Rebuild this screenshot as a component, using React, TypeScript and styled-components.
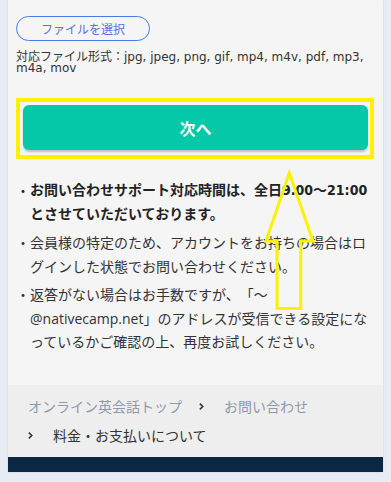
import React from "react";
import styled, { createGlobalStyle } from "styled-components";

const GlobalStyle = createGlobalStyle`
  html, body { margin: 0; padding: 0; }
  body {
    background: #e8ecf4;
    font-family: "Open Sans", "Noto Sans CJK JP", sans-serif;
    color: #333;
  }
`;

const Page = styled.div`
  padding: 0 8px 10px;
`;

const Panel = styled.div`
  position: relative;
  background: #f5f5f5;
  box-shadow: 0 0 2px rgba(0, 0, 0, 0.12);
`;

const Main = styled.section`
  padding: 16px 8px 31px;
`;

const FileButton = styled.button`
  display: flex;
  align-items: center;
  justify-content: center;
  width: 134px;
  height: 25px;
  padding: 0;
  border: 1.5px solid #4a7be3;
  border-radius: 13px;
  background: transparent;
  color: #5a6ee6;
  font-family: "Noto Sans CJK JP", sans-serif;
  font-size: 12px;
  cursor: pointer;
`;

const FormatText = styled.p`
  margin: 11px 0 0;
  font-family: "DejaVu Sans", "Noto Sans CJK JP", sans-serif;
  font-size: 12px;
  line-height: 11px;
  color: #333;
  text-spacing-trim: space-all;
`;

const Highlight = styled.div`
  margin-top: 24px;
  width: 358px;
  box-sizing: border-box;
  border: 4px solid #fff100;
  padding: 3px 2px 5px 3px;
`;

const NextButton = styled.button`
  display: flex;
  align-items: center;
  justify-content: center;
  width: 100%;
  height: 45px;
  border: none;
  border-radius: 6px;
  background: #04c8a8;
  box-shadow: 0 2px 2px rgba(0, 0, 0, 0.22);
  color: #fff;
  font-family: "Noto Sans CJK JP", sans-serif;
  font-weight: 700;
  font-size: 16px;
  cursor: pointer;
`;

const Notes = styled.ul`
  list-style: none;
  margin: 20px 0 0;
  padding: 0;
  text-spacing-trim: space-all;
`;

const Note = styled.li<{ $bold?: boolean }>`
  display: flex;
  font-size: 14px;
  line-height: 23.5px;
  font-weight: ${(p) => (p.$bold ? 700 : 400)};
  color: ${(p) => (p.$bold ? "#222" : "#333")};
  ${(p) =>
    p.$bold
      ? `font-family: "DejaVu Sans Condensed", "DejaVu Sans", "Noto Sans CJK JP", sans-serif; font-stretch: condensed;`
      : ""}
  & + & { margin-top: 5px; }
`;

const Dot = styled.span`
  flex: 0 0 14px;
  font-weight: 400;
  text-align: center;
  font-family: "Noto Sans CJK JP", sans-serif;
  font-stretch: normal;
`;

const NoteText = styled.span`
  flex: 1;
  min-width: 0;
`;

const Breadcrumb = styled.ol`
  display: flex;
  flex-wrap: wrap;
  list-style: none;
  margin: 0;
  padding: 7px 20px;
  background: #eeeeee;
  font-family: "Noto Sans CJK JP", sans-serif;
  font-size: 14px;
  line-height: 29px;
`;

const Crumb = styled.li<{ $current?: boolean }>`
  display: flex;
  align-items: center;
  margin-right: 17px;
  color: ${(p) => (p.$current ? "#333" : "#8e99ab")};
`;

const Chevron = styled.svg`
  flex: 0 0 auto;
  margin-right: 20px;
`;

const Footer = styled.div`
  height: 15px;
  background: #0b2744;
`;

const ArrowMark = styled.svg`
  position: absolute;
  left: 242px;
  top: 160px;
  pointer-events: none;
`;

const Sep = () => (
  <Chevron width="5" height="7" viewBox="0 0 5 7">
    <polyline points="0.8,0.6 3.8,3.5 0.8,6.4" fill="none" stroke="#333" strokeWidth="1.5" />
  </Chevron>
);

export default function App() {
  return (
    <>
      <GlobalStyle />
      <Page>
        <Panel>
          <Main>
            <FileButton>ファイルを選択</FileButton>
            <FormatText>
              対応ファイル形式：jpg, jpeg, png, gif, mp4, m4v, pdf, mp3, m4a, mov
            </FormatText>
            <Highlight>
              <NextButton>次へ</NextButton>
            </Highlight>
            <Notes>
              <Note $bold>
                <Dot>・</Dot>
                <NoteText>お問い合わせサポート対応時間は、全日9.00～21:00とさせていただいております。</NoteText>
              </Note>
              <Note>
                <Dot>・</Dot>
                <NoteText>会員様の特定のため、アカウントをお持ちの場合はログインした状態でお問い合わせください。</NoteText>
              </Note>
              <Note>
                <Dot>・</Dot>
                <NoteText>返答がない場合はお手数ですが、「～@nativecamp.net」のアドレスが受信できる設定になっているかご確認の上、再度お試しください。</NoteText>
              </Note>
            </Notes>
          </Main>
          <Breadcrumb>
            <Crumb>オンライン英会話トップ</Crumb>
            <Crumb>
              <Sep />
              お問い合わせ
            </Crumb>
            <Crumb $current>
              <Sep />
              料金・お支払いについて
            </Crumb>
          </Breadcrumb>
          <Footer />
          <ArrowMark width="80" height="160" viewBox="0 0 80 160">
            <polygon
              points="39.3,13 16,81 27,81 27,148.5 50.7,148.5 50.7,81 63,81"
              fill="none"
              stroke="#fff100"
              strokeWidth="3"
              strokeLinejoin="miter"
            />
          </ArrowMark>
        </Panel>
      </Page>
    </>
  );
}
